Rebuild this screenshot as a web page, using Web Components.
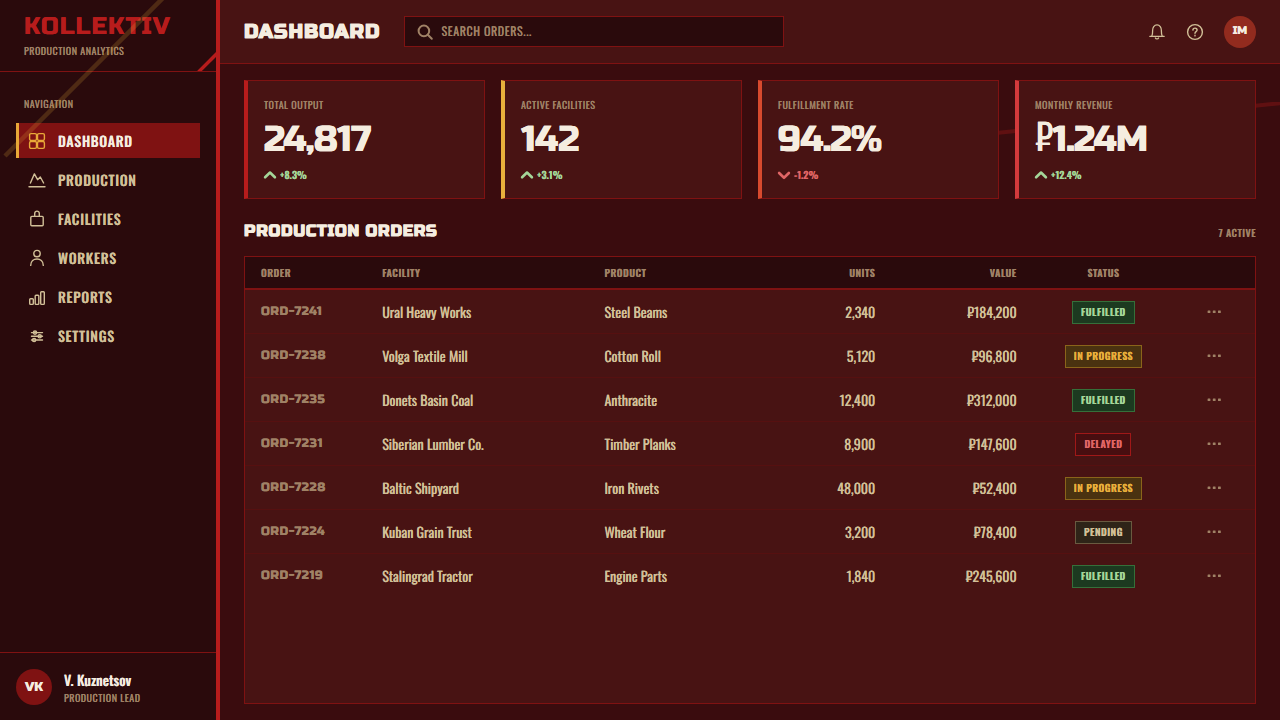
<!DOCTYPE html>
<html lang="en">
<head>
<meta charset="utf-8">
<meta name="viewport" content="width=device-width, initial-scale=1">
<title>Kollektiv – Dashboard</title>
<style>
  :root {
    --ink: #2a0a0c;
    --ground: #3a0c0e;
    --panel: #481313;
    --line: #7f1212;
    --row-line: #561010;
    --red: #b71c1c;
    --gold: #e8a838;
    --cream: #f5ede0;
    --sand: #d2c098;
    --muted: #a08266;
    --good: #a5d699;
    --bad: #e06666;
    --display: "Russo One", "Oswald", sans-serif;
    --text: "Oswald", sans-serif;
  }
  body {
    margin: 0;
    background: var(--ground);
    color: var(--sand);
    font: 400 14px/20px var(--text);
    text-rendering: geometricPrecision;
    text-shadow: 0 0 0;
  }
</style>
</head>
<body>
<app-shell>
  <side-bar slot="side">
    <nav-item icon="grid" active>Dashboard</nav-item>
    <nav-item icon="peaks">Production</nav-item>
    <nav-item icon="bag">Facilities</nav-item>
    <nav-item icon="person">Workers</nav-item>
    <nav-item icon="bars">Reports</nav-item>
    <nav-item icon="sliders">Settings</nav-item>
  </side-bar>
  <top-bar slot="top">Dashboard</top-bar>
  <stat-row>
    <stat-card label="Total Output" value="24,817" change="+8.3%" style="--accent:#b71c1c"></stat-card>
    <stat-card label="Active Facilities" value="142" change="+3.1%" style="--accent:#e8b03c"></stat-card>
    <stat-card label="Fulfillment Rate" value="94.2%" change="-1.2%" style="--accent:#d84a2e"></stat-card>
    <stat-card label="Monthly Revenue" value="₽1.24M" change="+12.4%" style="--accent:#d33a3c"></stat-card>
  </stat-row>
  <order-board></order-board>
</app-shell>

<script>
const define = (name, markup, setup) => {
  const template = document.createElement('template');
  template.innerHTML = markup;
  customElements.define(name, class extends HTMLElement {
    connectedCallback() {
      if (this.shadowRoot) return;
      const root = this.attachShadow({ mode: 'open' });
      root.append(template.content.cloneNode(true));
      if (setup) setup(this, root);
    }
  });
};

const icons = {
  grid: [18, 1.4, '<rect x="1.6" y="1.6" width="6.9" height="6.9" rx="1.4"/><rect x="9.5" y="1.6" width="6.9" height="6.9" rx="1.4"/><rect x="1.6" y="9.5" width="6.9" height="6.9" rx="1.4"/><rect x="9.5" y="9.5" width="6.9" height="6.9" rx="1.4"/>'],
  peaks: [18, 1.4, '<path d="M2.4 12 6.4 2.9 9.6 8.7 12.3 6 15.6 12M1 15.8h16"/>'],
  bag: [18, 1.4, '<rect x="2.8" y="6.4" width="12.4" height="9.4" rx="1"/><path d="M6.7 6.4V3.400a2.3 2.3 0 0 1 4.6 0v3"/>'],
  person: [18, 1.4, '<circle cx="9" cy="4.6" r="3.2"/><path d="M2.7 16.4c0-8.6 12.6-8.6 12.6 0"/>'],
  bars: [18, 1.4, '<rect x="1.7" y="10.8" width="3.6" height="5.6" rx=".8"/><rect x="7.2" y="7.3" width="3.6" height="9.1" rx=".8"/><rect x="12.7" y="3.8" width="3.6" height="12.6" rx=".8"/>'],
  sliders: [18, 1.4, '<path d="M3.5 5.6h11M3.5 9.3h11M3.5 13h11"/><circle cx="7" cy="5.6" r="1.6"/><circle cx="11.7" cy="9.3" r="1.6"/><circle cx="6.1" cy="13" r="1.6"/>'],
  search: [16, 2, '<circle cx="6.9" cy="6.9" r="5.3"/><path d="m10.8 10.8 4 4"/>'],
  bell: [18, 1.3, '<path d="M1.8 13.3h14.4M3.8 13c.9-1.6.8-3.6.8-5.2A4.4 5.4 0 0 1 9 1.9a4.4 5.4 0 0 1 4.4 5.9c0 1.6-.1 3.6.8 5.2M7.4 15c.5 1.2 2.7 1.2 3.2 0"/>'],
  help: [18, 1.4, '<circle cx="9" cy="9" r="7.4"/><path d="M6.9 7.1c.1-2.7 4.3-2.6 4.2 0 0 1.6-2.1 1.5-2.1 3.2M9 12.3v.6"/>'],
  up: [12, 2.6, '<path d="M1.1 8.3 6 3.5l4.9 4.8"/>'],
  down: [12, 2.6, '<path d="M1.1 4 6 8.8 10.9 4"/>'],
  dots: [16, 0, '<g fill="currentColor"><rect x=".6" y="6.6" width="2.8" height="2.4" rx=".5"/><rect x="5.8" y="6.6" width="2.8" height="2.4" rx=".5"/><rect x="11" y="6.6" width="2.8" height="2.4" rx=".5"/></g>']
};
define('ui-icon', `
  <style>
    :host { display: block; flex: none; }
    svg { display: block; overflow: visible; fill: none; stroke: currentColor; stroke-linecap: round; stroke-linejoin: round; }
  </style>
  <svg aria-hidden="true"></svg>`, (host, root) => {
  const [size, weight, shape] = icons[host.getAttribute('name')];
  const svg = root.querySelector('svg');
  svg.setAttribute('viewBox', `0 0 ${size} ${size}`);
  svg.setAttribute('width', size);
  svg.setAttribute('height', size);
  svg.setAttribute('stroke-width', weight);
  svg.innerHTML = shape;
});

define('app-shell', `
  <style>
    :host { display: grid; grid-template-columns: 220px minmax(0, 1fr); min-height: 100vh; }
    .main { position: relative; display: flex; flex-direction: column; min-width: 0; }
    .sweep { position: absolute; top: 102px; right: 0; width: 380px; height: 44px; }
    main { position: relative; flex: 1; display: flex; flex-direction: column; gap: 20px; padding: 16px 24px; }
  </style>
  <slot name="side"></slot>
  <div class="main">
    <svg class="sweep" viewBox="0 0 380 44" aria-hidden="true"><path d="M0 41 382 1" stroke="#b71c1c" stroke-opacity=".3" stroke-width="4"/></svg>
    <slot name="top"></slot>
    <main><slot></slot></main>
  </div>`);

define('user-avatar', `
  <style>
    :host {
      display: grid; place-items: center; flex: none; box-sizing: border-box;
      width: 36px; height: 36px; border-radius: 50%;
      background: #7f1212; color: var(--cream); font: 400 13px/16px var(--display);
    }
  </style>
  <span><slot></slot></span>`);

define('side-bar', `
  <style>
    :host { position: relative; display: flex; flex-direction: column; background: var(--ink); border-right: 4px solid var(--red); }
    .brand { position: relative; overflow: hidden; height: 71px; box-sizing: border-box; padding: 13px 24px 0; }
    .name { font: 400 24px/28px var(--display); letter-spacing: .05em; color: var(--red); }
    .tag { font-size: 10px; line-height: 20px; letter-spacing: .05em; text-transform: uppercase; color: var(--muted); }
    .corner { position: absolute; right: 0; bottom: 0; }
    nav { flex: 1; border-top: 1px solid var(--line); padding: 24px 16px; }
    h2 { margin: 0 8px 11px; font-weight: 400; font-size: 10px; line-height: 16px; letter-spacing: .05em; text-transform: uppercase; color: var(--muted); }
    .items { display: flex; flex-direction: column; gap: 4px; }
    footer { display: flex; align-items: center; gap: 12px; padding: 16px 16px 15px; border-top: 1px solid var(--line); }
    .who { padding-top: 2px; font-weight: 500; line-height: 20px; color: var(--cream); }
    .role { font-size: 10px; line-height: 14px; letter-spacing: .05em; text-transform: uppercase; color: var(--muted); }
    .beam { position: absolute; top: 0; left: 0; pointer-events: none; }
  </style>
  <div class="brand">
    <div class="name">KOLLEKTIV</div>
    <div class="tag">Production Analytics</div>
    <svg class="corner" width="20" height="20" viewBox="0 0 20 20" aria-hidden="true"><path d="M-1 24.5 24 -.5" stroke="#b71c1c" stroke-width="3.4"/></svg>
  </div>
  <nav aria-labelledby="nav-title">
    <h2 id="nav-title">Navigation</h2>
    <div class="items"><slot></slot></div>
  </nav>
  <footer>
    <user-avatar>VK</user-avatar>
    <div><div class="who">V. Kuznetsov</div><div class="role">Production Lead</div></div>
  </footer>
  <svg class="beam" width="180" height="160" viewBox="0 0 180 160" aria-hidden="true"><path d="M5 156 171-10" stroke="#e8a838" stroke-opacity=".2" stroke-width="4.5"/></svg>`);

define('nav-item', `
  <style>
    :host { display: block; }
    a {
      display: flex; align-items: center; gap: 12px; box-sizing: border-box; height: 35px; padding: 0 9px; border-left: 3px solid transparent;
      color: var(--sand); font-weight: 500; letter-spacing: .05em; text-transform: uppercase; text-decoration: none;
    }
    .label { padding-top: 2px; }
    :host([active]) a { background: #7f1212; border-color: var(--gold); color: var(--cream); }
    :host([active]) ui-icon { color: var(--gold); }
  </style>
  <a href="#"><span class="icon"></span><span class="label"><slot></slot></span></a>`, (host, root) => {
  const icon = document.createElement('ui-icon');
  icon.setAttribute('name', host.getAttribute('icon'));
  root.querySelector('.icon').replaceWith(icon);
  if (host.hasAttribute('active')) root.querySelector('a').setAttribute('aria-current', 'page');
});

define('top-bar', `
  <style>
    :host { position: relative; display: flex; align-items: center; box-sizing: border-box; height: 64px; padding: 0 24px; background: var(--panel); border-bottom: 1px solid var(--line); }
    h1 { margin: 0 24px 0 0; font: 700 20px/24px var(--display); letter-spacing: .05em; text-transform: uppercase; color: var(--cream); }
    label { display: flex; align-items: center; gap: 8px; box-sizing: border-box; flex: 0 1 380px; height: 31px; padding: 0 12px; background: var(--ink); border: 1px solid var(--line); color: var(--muted); }
    input { flex: 1; min-width: 0; padding: 0; border: 0; outline: 0; background: none; color: var(--cream); font: 400 12px/20px var(--text); letter-spacing: .05em; text-transform: uppercase; text-rendering: inherit; text-shadow: inherit; }
    input::placeholder { color: var(--muted); opacity: 1; }
    .tools { display: flex; align-items: center; gap: 4px; margin-left: auto; }
    button { display: grid; place-items: center; width: 34px; height: 34px; padding: 0; border: 0; background: none; color: var(--sand); }
    user-avatar { width: 32px; height: 32px; margin-left: 8px; background: #922b1e; font-size: 11px; }
  </style>
  <h1><slot></slot></h1>
  <label><ui-icon name="search"></ui-icon><input type="search" placeholder="Search orders..." aria-label="Search orders"></label>
  <div class="tools">
    <button type="button" aria-label="Notifications"><ui-icon name="bell"></ui-icon></button>
    <button type="button" aria-label="Help"><ui-icon name="help"></ui-icon></button>
    <user-avatar>IM</user-avatar>
  </div>`);

define('stat-row', `
  <style>
    :host { display: grid; grid-template-columns: repeat(4, minmax(0, 1fr)); gap: 16px; }
  </style>
  <slot></slot>`);

define('stat-card', `
  <style>
    :host { display: block; padding: 16px; background: var(--panel); border: 1px solid var(--line); border-left: 4px solid var(--accent); }
    .label { font-size: 10px; line-height: 16px; letter-spacing: .05em; text-transform: uppercase; color: var(--muted); }
    .value { margin: 6px 0 4px; font: 400 36px/44px var(--display); letter-spacing: -.02em; color: var(--cream); }
    .change { display: flex; align-items: center; gap: 4px; font-size: 10px; line-height: 15px; font-weight: 600; color: var(--good); }
    .change.down { color: var(--bad); }
  </style>
  <div class="label"></div>
  <div class="value"></div>
  <div class="change"><span class="text"></span></div>`, (host, root) => {
  const get = key => host.getAttribute(key);
  root.querySelector('.label').textContent = get('label');
  root.querySelector('.value').textContent = get('value');
  root.querySelector('.text').textContent = get('change');
  const falling = get('change').startsWith('-');
  const change = root.querySelector('.change');
  change.classList.toggle('down', falling);
  const icon = document.createElement('ui-icon');
  icon.setAttribute('name', falling ? 'down' : 'up');
  change.prepend(icon);
});

define('status-badge', `
  <style>
    :host {
      display: block; box-sizing: border-box; width: fit-content; height: 23px; margin: 0 auto; padding: 0 8px;
      border: 1px solid #6a5a40; background: #2e2418; color: var(--sand);
      font-weight: 600; font-size: 10px; line-height: 20px; letter-spacing: .05em; text-transform: uppercase;
    }
    :host([kind="fulfilled"]) { background: #1c3a20; border-color: #35703a; color: var(--good); }
    :host([kind="in-progress"]) { background: #4a3210; border-color: #8a641a; color: #e8b03c; }
    :host([kind="delayed"]) { background: #480e10; border-color: #a01818; color: var(--bad); }
  </style>
  <slot></slot>`);

const orders = [
  ['ORD-7241', 'Ural Heavy Works', 'Steel Beams', '2,340', '₽184,200', 'Fulfilled'],
  ['ORD-7238', 'Volga Textile Mill', 'Cotton Roll', '5,120', '₽96,800', 'In Progress'],
  ['ORD-7235', 'Donets Basin Coal', 'Anthracite', '12,400', '₽312,000', 'Fulfilled'],
  ['ORD-7231', 'Siberian Lumber Co.', 'Timber Planks', '8,900', '₽147,600', 'Delayed'],
  ['ORD-7228', 'Baltic Shipyard', 'Iron Rivets', '48,000', '₽52,400', 'In Progress'],
  ['ORD-7224', 'Kuban Grain Trust', 'Wheat Flour', '3,200', '₽78,400', 'Pending'],
  ['ORD-7219', 'Stalingrad Tractor', 'Engine Parts', '1,840', '₽245,600', 'Fulfilled']
];
define('order-board', `
  <style>
    :host { flex: 1; display: flex; flex-direction: column; gap: 12px; }
    header { display: flex; justify-content: space-between; align-items: center; }
    h2 { margin: 0; padding-top: 1px; font: 700 16px/24px var(--display); letter-spacing: .05em; text-transform: uppercase; color: var(--cream); }
    .count { padding-top: 2px; font-size: 10px; line-height: 20px; font-weight: 500; letter-spacing: .05em; text-transform: uppercase; color: var(--muted); }
    .panel { flex: 1; background: var(--panel); border: 1px solid var(--line); }
    table { width: 100%; table-layout: fixed; border-collapse: separate; border-spacing: 0; }
    th { box-sizing: border-box; height: 33px; padding: 0 16px; background: var(--ink); border-bottom: 2px solid var(--line); font-weight: 600; font-size: 10px; line-height: 16px; letter-spacing: .05em; text-transform: uppercase; text-align: left; color: var(--muted); }
    td { box-sizing: border-box; height: 44px; padding: 2px 16px 0; border-bottom: 1px solid var(--row-line); }
    tr:last-child td { border-bottom-color: transparent; }
    td.id { padding-top: 1px; font-family: var(--display); font-size: 12px; letter-spacing: .05em; color: var(--muted); }
    .num { text-align: right; }
    .mid { text-align: center; }
    td.mid { padding-top: 1px; }
    td.menu { padding-top: 0; }
    button { display: block; margin: 0 auto; padding: 4px; border: 0; background: none; color: var(--muted); }
  </style>
  <header><h2>Production Orders</h2><span class="count">7 Active</span></header>
  <div class="panel">
    <table>
      <colgroup><col style="width:12%"><col style="width:22%"><col style="width:18%"><col style="width:12%"><col style="width:14%"><col style="width:14%"><col style="width:8%"></colgroup>
      <thead><tr><th scope="col">Order</th><th scope="col">Facility</th><th scope="col">Product</th><th scope="col" class="num">Units</th><th scope="col" class="num">Value</th><th scope="col" class="mid">Status</th><th></th></tr></thead>
      <tbody></tbody>
    </table>
  </div>`, (host, root) => {
  root.querySelector('tbody').innerHTML = orders.map(([id, facility, product, units, value, status]) => `
    <tr><td class="id">${id}</td><td>${facility}</td><td>${product}</td><td class="num">${units}</td><td class="num">${value}</td>
    <td class="mid"><status-badge kind="${status.toLowerCase().replace(' ', '-')}">${status}</status-badge></td>
    <td class="menu"><button type="button" aria-label="Actions for ${id}"><ui-icon name="dots"></ui-icon></button></td></tr>`).join('');
});
</script>
</body>
</html>
